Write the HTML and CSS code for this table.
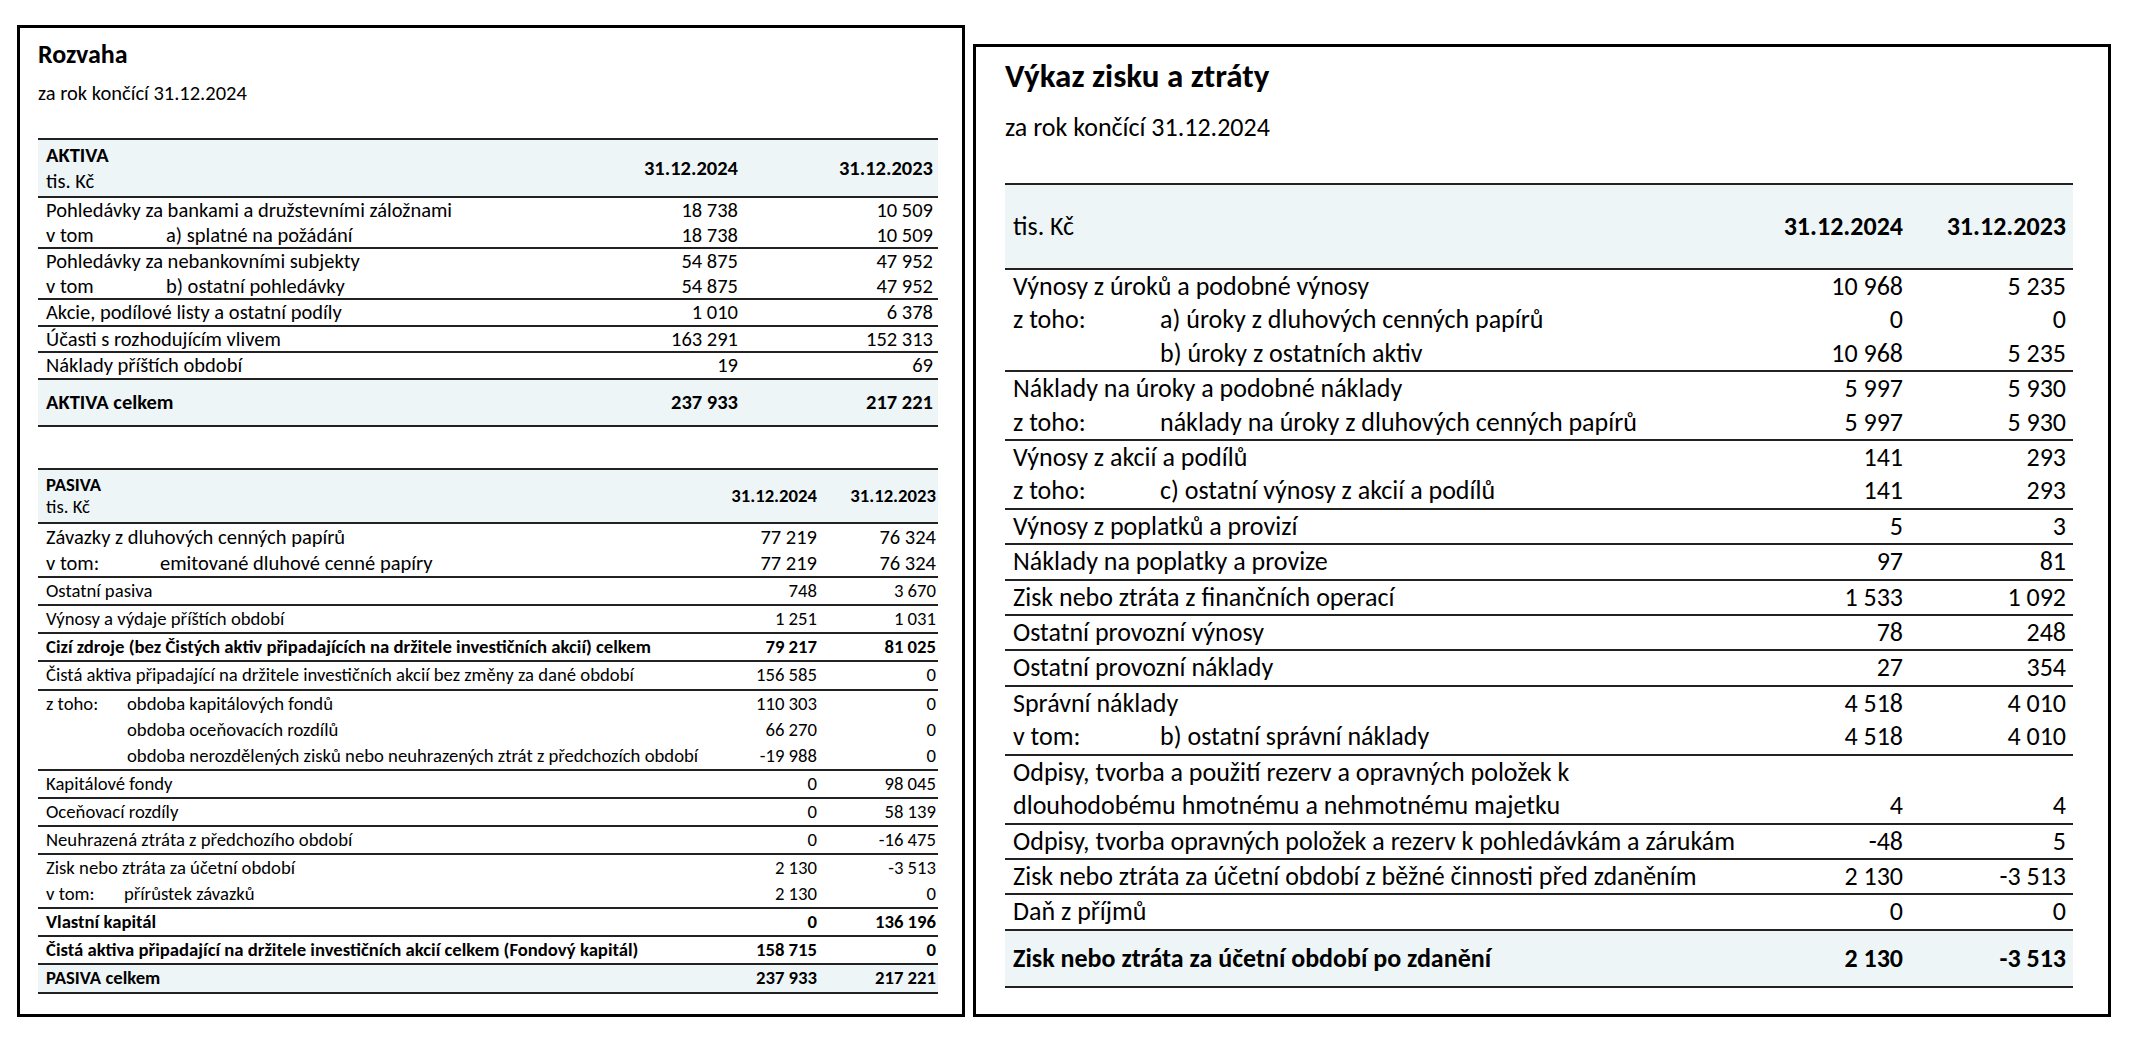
FILE: index.html
```html
<!DOCTYPE html>
<html lang="cs">
<head>
<meta charset="utf-8">
<title>Rozvaha a Výkaz zisku a ztráty</title>
<link rel="stylesheet" href="styles.css">
</head>
<body>
<div class="page">
  <section class="panel panel-left">
    <h1 class="title-l">Rozvaha</h1>
    <p class="sub-l">za rok končící 31.12.2024</p>

    <div class="sheet aktiva">
      <div class="grp head">
        <div class="row">
          <div class="lbl"><b>AKTIVA</b><br>tis. Kč</div>
          <div class="num b">31.12.2024</div>
          <div class="num b">31.12.2023</div>
        </div>
      </div>
      <div class="grp">
        <div class="row"><div class="lbl">Pohledávky za bankami a družstevními záložnami</div><div class="num">18 738</div><div class="num">10 509</div></div>
        <div class="row"><div class="lbl"><span class="pre pre-a">v tom</span>a) splatné na požádání</div><div class="num">18 738</div><div class="num">10 509</div></div>
      </div>
      <div class="grp">
        <div class="row"><div class="lbl">Pohledávky za nebankovními subjekty</div><div class="num">54 875</div><div class="num">47 952</div></div>
        <div class="row"><div class="lbl"><span class="pre pre-a">v tom</span>b) ostatní pohledávky</div><div class="num">54 875</div><div class="num">47 952</div></div>
      </div>
      <div class="grp">
        <div class="row"><div class="lbl">Akcie, podílové listy a ostatní podíly</div><div class="num">1 010</div><div class="num">6 378</div></div>
      </div>
      <div class="grp">
        <div class="row"><div class="lbl">Účasti s rozhodujícím vlivem</div><div class="num">163 291</div><div class="num">152 313</div></div>
      </div>
      <div class="grp">
        <div class="row"><div class="lbl">Náklady příštích období</div><div class="num">19</div><div class="num">69</div></div>
      </div>
      <div class="grp total">
        <div class="row"><div class="lbl">AKTIVA celkem</div><div class="num">237 933</div><div class="num">217 221</div></div>
      </div>
    </div>

    <div class="sheet pasiva">
      <div class="grp head">
        <div class="row">
          <div class="lbl"><b>PASIVA</b><br>tis. Kč</div>
          <div class="num b">31.12.2024</div>
          <div class="num b">31.12.2023</div>
        </div>
      </div>
      <div class="grp big">
        <div class="row"><div class="lbl">Závazky z dluhových cenných papírů</div><div class="num">77 219</div><div class="num">76 324</div></div>
        <div class="row"><div class="lbl"><span class="pre pre-p1">v tom:</span>emitované dluhové cenné papíry</div><div class="num">77 219</div><div class="num">76 324</div></div>
      </div>
      <div class="grp">
        <div class="row"><div class="lbl">Ostatní pasiva</div><div class="num">748</div><div class="num">3 670</div></div>
      </div>
      <div class="grp">
        <div class="row"><div class="lbl">Výnosy a výdaje příštích období</div><div class="num">1 251</div><div class="num">1 031</div></div>
      </div>
      <div class="grp b">
        <div class="row"><div class="lbl">Cizí zdroje (bez Čistých aktiv připadajících na držitele investičních akcií) celkem</div><div class="num">79 217</div><div class="num">81 025</div></div>
      </div>
      <div class="grp">
        <div class="row"><div class="lbl">Čistá aktiva připadající na držitele investičních akcií bez změny za dané období</div><div class="num">156 585</div><div class="num">0</div></div>
      </div>
      <div class="grp">
        <div class="row"><div class="lbl"><span class="pre pre-p2">z toho:</span>obdoba kapitálových fondů</div><div class="num">110 303</div><div class="num">0</div></div>
        <div class="row"><div class="lbl"><span class="pre pre-p2"></span>obdoba oceňovacích rozdílů</div><div class="num">66 270</div><div class="num">0</div></div>
        <div class="row"><div class="lbl"><span class="pre pre-p2"></span>obdoba nerozdělených zisků nebo neuhrazených ztrát z předchozích období</div><div class="num">-19 988</div><div class="num">0</div></div>
      </div>
      <div class="grp">
        <div class="row"><div class="lbl">Kapitálové fondy</div><div class="num">0</div><div class="num">98 045</div></div>
      </div>
      <div class="grp">
        <div class="row"><div class="lbl">Oceňovací rozdíly</div><div class="num">0</div><div class="num">58 139</div></div>
      </div>
      <div class="grp">
        <div class="row"><div class="lbl">Neuhrazená ztráta z předchozího období</div><div class="num">0</div><div class="num">-16 475</div></div>
      </div>
      <div class="grp">
        <div class="row"><div class="lbl">Zisk nebo ztráta za účetní období</div><div class="num">2 130</div><div class="num">-3 513</div></div>
        <div class="row"><div class="lbl"><span class="pre pre-p3">v tom:</span>přírůstek závazků</div><div class="num">2 130</div><div class="num">0</div></div>
      </div>
      <div class="grp b">
        <div class="row"><div class="lbl">Vlastní kapitál</div><div class="num">0</div><div class="num">136 196</div></div>
      </div>
      <div class="grp b">
        <div class="row"><div class="lbl">Čistá aktiva připadající na držitele investičních akcií celkem (Fondový kapitál)</div><div class="num">158 715</div><div class="num">0</div></div>
      </div>
      <div class="grp b shade">
        <div class="row"><div class="lbl">PASIVA celkem</div><div class="num">237 933</div><div class="num">217 221</div></div>
      </div>
    </div>
  </section>

  <section class="panel panel-right">
    <h1 class="title-r">Výkaz zisku a ztráty</h1>
    <p class="sub-r">za rok končící 31.12.2024</p>

    <div class="sheet vzz">
      <div class="grp head">
        <div class="row"><div class="lbl">tis. Kč</div><div class="num b">31.12.2024</div><div class="num b">31.12.2023</div></div>
      </div>
      <div class="grp">
        <div class="row"><div class="lbl">Výnosy z úroků a podobné výnosy</div><div class="num">10 968</div><div class="num">5 235</div></div>
        <div class="row"><div class="lbl"><span class="pre pre-r">z toho:</span>a) úroky z dluhových cenných papírů</div><div class="num">0</div><div class="num">0</div></div>
        <div class="row"><div class="lbl"><span class="pre pre-r"></span>b) úroky z ostatních aktiv</div><div class="num">10 968</div><div class="num">5 235</div></div>
      </div>
      <div class="grp">
        <div class="row"><div class="lbl">Náklady na úroky a podobné náklady</div><div class="num">5 997</div><div class="num">5 930</div></div>
        <div class="row"><div class="lbl"><span class="pre pre-r">z toho:</span>náklady na úroky z dluhových cenných papírů</div><div class="num">5 997</div><div class="num">5 930</div></div>
      </div>
      <div class="grp">
        <div class="row"><div class="lbl">Výnosy z akcií a podílů</div><div class="num">141</div><div class="num">293</div></div>
        <div class="row"><div class="lbl"><span class="pre pre-r">z toho:</span>c) ostatní výnosy z akcií a podílů</div><div class="num">141</div><div class="num">293</div></div>
      </div>
      <div class="grp">
        <div class="row"><div class="lbl">Výnosy z poplatků a provizí</div><div class="num">5</div><div class="num">3</div></div>
      </div>
      <div class="grp">
        <div class="row"><div class="lbl">Náklady na poplatky a provize</div><div class="num">97</div><div class="num">81</div></div>
      </div>
      <div class="grp">
        <div class="row"><div class="lbl">Zisk nebo ztráta z finančních operací</div><div class="num">1 533</div><div class="num">1 092</div></div>
      </div>
      <div class="grp">
        <div class="row"><div class="lbl">Ostatní provozní výnosy</div><div class="num">78</div><div class="num">248</div></div>
      </div>
      <div class="grp">
        <div class="row"><div class="lbl">Ostatní provozní náklady</div><div class="num">27</div><div class="num">354</div></div>
      </div>
      <div class="grp">
        <div class="row"><div class="lbl">Správní náklady</div><div class="num">4 518</div><div class="num">4 010</div></div>
        <div class="row"><div class="lbl"><span class="pre pre-r">v tom:</span>b) ostatní správní náklady</div><div class="num">4 518</div><div class="num">4 010</div></div>
      </div>
      <div class="grp">
        <div class="row"><div class="lbl">Odpisy, tvorba a použití rezerv a opravných položek k<br>dlouhodobému hmotnému a nehmotnému majetku</div><div class="num end">4</div><div class="num end">4</div></div>
      </div>
      <div class="grp">
        <div class="row"><div class="lbl">Odpisy, tvorba opravných položek a rezerv k pohledávkám a zárukám</div><div class="num">-48</div><div class="num">5</div></div>
      </div>
      <div class="grp">
        <div class="row"><div class="lbl">Zisk nebo ztráta za účetní období z běžné činnosti před zdaněním</div><div class="num">2 130</div><div class="num">-3 513</div></div>
      </div>
      <div class="grp">
        <div class="row"><div class="lbl">Daň z příjmů</div><div class="num">0</div><div class="num">0</div></div>
      </div>
      <div class="grp total">
        <div class="row"><div class="lbl">Zisk nebo ztráta za účetní období po zdanění</div><div class="num">2 130</div><div class="num">-3 513</div></div>
      </div>
    </div>
  </section>
</div>
</body>
</html>
```

FILE: styles.css
```css
* { box-sizing: border-box; }

body {
  margin: 0;
  background: #ffffff;
  color: #000000;
  font-family: Carlito, Calibri, Lato, "Liberation Sans", sans-serif;
}

.page {
  display: flex;
  align-items: flex-start;
  gap: 8px;
  padding: 25px 0 0 17px;
}

.panel {
  border: 3px solid #000;
  background: #fff;
}

.panel-left {
  width: 948px;
  height: 992px;
  padding: 10px 24px 0 18px;
}

.panel-right {
  width: 1138px;
  height: 973px;
  margin-top: 19px;
  padding: 9px 35px 0 29px;
}

.title-l {
  margin: 0;
  font-size: 26px;
  line-height: 32px;
  font-weight: 700;
}

.sub-l {
  margin: 10px 0 0;
  font-size: 20.5px;
  line-height: 26px;
}

.title-r {
  margin: 0;
  font-size: 33px;
  line-height: 40px;
  font-weight: 700;
}

.sub-r {
  margin: 15px 0 0;
  font-size: 26px;
  line-height: 32px;
}

/* tables */
.sheet {
  border-top: 2px solid #222;
}

.grp {
  border-bottom: 2px solid #222;
}

.row {
  display: grid;
  grid-template-columns: 1fr var(--col) var(--col);
  align-items: center;
}

.lbl {
  padding-left: 8px;
  white-space: nowrap;
}

.num {
  text-align: right;
  padding-right: var(--pr);
  white-space: nowrap;
}

.num.end { align-self: end; }

.b { font-weight: 700; }

.pre {
  display: inline-block;
}

.head { background: #eef5f7; }
.shade { background: #eef5f7; }

/* AKTIVA */
.aktiva {
  --col: 195px;
  --pr: 5px;
  margin-top: 32px;
  font-size: 20.5px;
  line-height: 24.57px;
}

.aktiva .head { padding: 2px 0; line-height: 26px; }

.aktiva .total {
  background: #eef5f7;
  font-weight: 700;
  line-height: 45px;
}

.pre-a { width: 120px; }

/* PASIVA */
.pasiva {
  --col: 119px;
  --pr: 2px;
  margin-top: 41px;
  font-size: 18.7px;
  line-height: 26.1px;
}

.pasiva .head { padding: 4px 0; line-height: 22px; }
.pasiva .big { font-size: 20.5px; }

.pre-p1 { width: 114px; }
.pre-p2 { width: 81px; }
.pre-p3 { width: 78px; }

/* VZZ */
.vzz {
  --col: 163px;
  --pr: 7px;
  margin-top: 40px;
  font-size: 26px;
  line-height: 33.4px;
}

.vzz .head { line-height: 83px; }

.vzz .total {
  background: #eef5f7;
  font-weight: 700;
  line-height: 55px;
}

.pre-r { width: 147px; }
```
